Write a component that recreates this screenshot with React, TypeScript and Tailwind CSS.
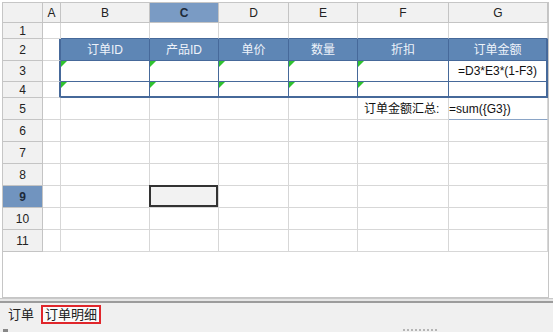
import React from 'react';

const colLetters = ['', 'A', 'B', 'C', 'D', 'E', 'F', 'G'];
const tableHeads = ['订单ID', '产品ID', '单价', '数量', '折扣', '订单金额'];

// row 0 = column letters, rows 1..11 = sheet rows
const rowCount = 12;

const Cell: React.FC<{ r: number; c: number }> = ({ r, c }) => {
  const inTable = r >= 2 && r <= 4 && c >= 2;
  const isHead = r === 2 && c >= 2;

  // column letter row
  if (r === 0) {
    return (
      <div
        className={`flex items-center justify-center border-r border-b border-[#c4c4c4] text-[12px] ${
          c === 3 ? 'bg-[#7a9bc4] font-bold text-[#1d2a3a]' : 'bg-[#f1f1f1] text-[#222]'
        }`}
      >
        {colLetters[c]}
      </div>
    );
  }

  // row numbers
  if (c === 0) {
    return (
      <div
        className={`flex items-center justify-center border-r border-b border-[#c4c4c4] text-[12px] ${
          r === 9 ? 'bg-[#7194bf] font-bold text-[#1d2a3a]' : 'bg-[#f1f1f1] text-[#222]'
        }`}
      >
        {r}
      </div>
    );
  }

  let right = 'border-r border-r-[#d7d7d7]';
  let bottom = 'border-b border-b-[#d7d7d7]';
  if (inTable) right = c === 7 ? 'border-r-2 border-r-[#46699a]' : 'border-r border-r-[#46699a]';
  if (c === 1 && r >= 2 && r <= 4) right = 'border-r-2 border-r-[#46699a]';
  if (inTable) bottom = r === 4 ? 'border-b-2 border-b-[#46699a]' : 'border-b border-b-[#46699a]';
  if (r === 1 && c >= 2) bottom = 'border-b border-b-[#46699a]';
  if (r === 5 && c === 7) bottom = 'border-b border-b-[#8aa4c6]';

  const marker = (r === 3 || r === 4) && c >= 2 && c <= 6;

  return (
    <div
      className={`relative flex items-center text-[12px] text-[#111] ${right} ${bottom} ${
        isHead ? 'bg-[#5e86b5] justify-center text-[#eef3fa]' : 'bg-white'
      }`}
    >
      {isHead && tableHeads[c - 2]}
      {marker && (
        <span className="absolute top-0 left-0 w-0 h-0 border-t-[6px] border-t-[#2fc22f] border-r-[6px] border-r-transparent" />
      )}
      {r === 3 && c === 7 && <span className="pl-[9px]">=D3*E3*(1-F3)</span>}
      {r === 5 && c === 6 && <span className="pl-[6px]">订单金额汇总:</span>}
      {r === 5 && c === 7 && <span>=sum({'{'}G3{'}'})</span>}
      {r === 9 && c === 3 && (
        <span className="absolute -left-px -top-px right-0 bottom-0 border-2 border-[#333] bg-[#f2f2f2]" />
      )}
    </div>
  );
};

const App: React.FC = () => {
  const cells: React.ReactNode[] = [];
  for (let r = 0; r < rowCount; r++) {
    for (let c = 0; c < 8; c++) {
      cells.push(<Cell key={`${r}-${c}`} r={r} c={c} />);
    }
  }

  return (
    <div
      className="w-[553px] h-[332px] bg-white flex flex-col overflow-hidden"
      style={{ fontFamily: '"Liberation Sans", "Noto Sans CJK SC", sans-serif' }}
    >
      {/* Sheet */}
      <div className="pt-[2px] pl-[2px] pr-[4px] h-[298px] flex flex-col">
        <div className="flex-1 border border-[#c6c6c6] bg-white overflow-hidden">
          <div className="grid grid-cols-[40px_18px_89px_69px_70px_69px_91px_99px] grid-rows-[20px_16px_22px_21px_16px_22px_22px_22px_22px_22px_22px_22px]">
            {cells}
          </div>
        </div>
      </div>

      {/* splitter */}
      <div className="h-[5px] border-t border-[#c9c9c9] bg-[#e6e6e6] border-b-2 border-b-[#9c9c9c]" />

      {/* Sheet tabs */}
      <div className="flex-1 bg-[#f0f0f0] flex flex-col">
        <div className="flex items-center gap-[5px] pl-[6px] pt-[2px] h-[21px]">
          <span className="text-[13px] text-[#222] px-[2px]">订单</span>
          <span className="text-[13px] text-[#222] border-2 border-[#e0262b] bg-[#fafafa] px-[2px] leading-[15px]">
            订单明细
          </span>
        </div>
        <div className="flex items-end px-[3px] flex-1">
          <span className="w-[5px] h-[3px] bg-[#888]" />
          <span className="ml-[395px] h-[3px] w-[34px] border-t-2 border-dotted border-[#b5b5b5]" />
        </div>
      </div>
    </div>
  );
};

export default App;
